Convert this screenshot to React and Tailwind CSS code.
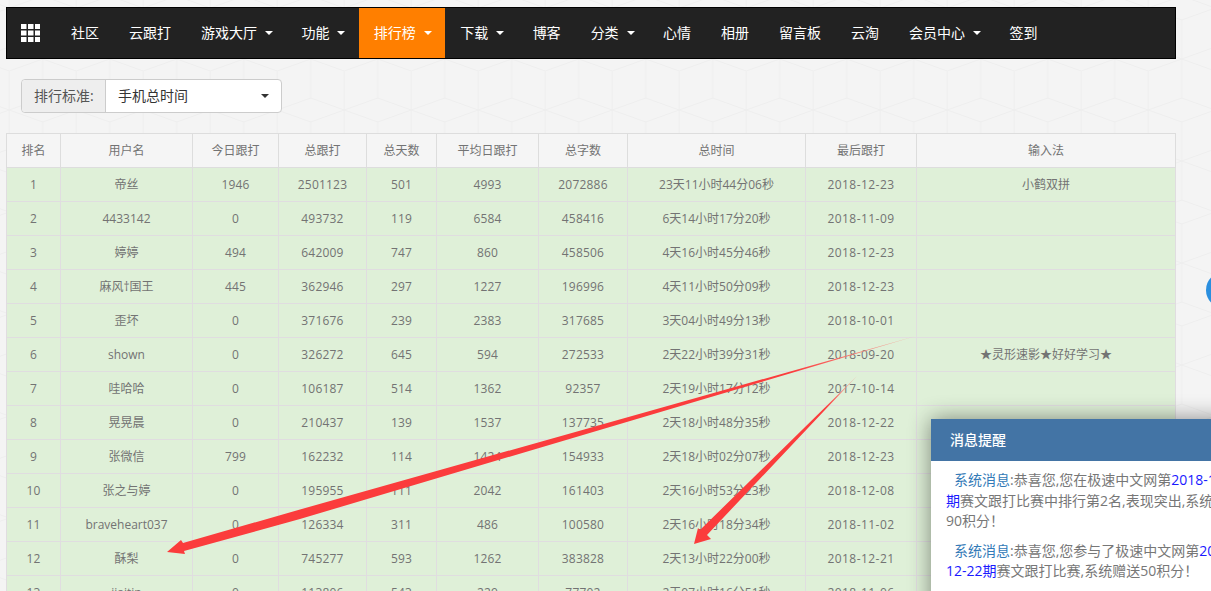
const navItems = [
  { label: "社区" },
  { label: "云跟打" },
  { label: "游戏大厅", caret: true },
  { label: "功能", caret: true },
  { label: "排行榜", caret: true, active: true },
  { label: "下载", caret: true },
  { label: "博客" },
  { label: "分类", caret: true },
  { label: "心情" },
  { label: "相册" },
  { label: "留言板" },
  { label: "云淘" },
  { label: "会员中心", caret: true },
  { label: "签到" },
];

const columns = [
  ["排名", "w-[54px]"],
  ["用户名", "w-[132px]"],
  ["今日跟打", "w-[86px]"],
  ["总跟打", "w-[88px]"],
  ["总天数", "w-[70px]"],
  ["平均日跟打", "w-[102px]"],
  ["总字数", "w-[89px]"],
  ["总时间", "w-[178px]"],
  ["最后跟打", "w-[111px]"],
  ["输入法", "w-[259px]"],
];

const rows = [
  [1, "帝丝", 1946, 2501123, 501, 4993, 2072886, "23天11小时44分06秒", "2018-12-23", "小鹤双拼"],
  [2, "4433142", 0, 493732, 119, 6584, 458416, "6天14小时17分20秒", "2018-11-09", ""],
  [3, "婷婷", 494, 642009, 747, 860, 458506, "4天16小时45分46秒", "2018-12-23", ""],
  [4, "麻风†国王", 445, 362946, 297, 1227, 196996, "4天11小时50分09秒", "2018-12-23", ""],
  [5, "歪坏", 0, 371676, 239, 2383, 317685, "3天04小时49分13秒", "2018-10-01", ""],
  [6, "shown", 0, 326272, 645, 594, 272533, "2天22小时39分31秒", "2018-09-20", "★灵形速影★好好学习★"],
  [7, "哇哈哈", 0, 106187, 514, 1362, 92357, "2天19小时17分12秒", "2017-10-14", ""],
  [8, "晃晃晨", 0, 210437, 139, 1537, 137735, "2天18小时48分35秒", "2018-12-22", ""],
  [9, "张微信", 799, 162232, 114, 1424, 154933, "2天18小时02分07秒", "2018-12-23", ""],
  [10, "张之与婷", 0, 195955, 111, 2042, 161403, "2天16小时53分23秒", "2018-12-08", ""],
  [11, "braveheart037", 0, 126334, 311, 486, 100580, "2天16小时18分34秒", "2018-11-02", ""],
  [12, "酥梨", 0, 745277, 593, 1262, 383828, "2天13小时22分00秒", "2018-12-21", ""],
  [13, "jiajtin", 0, 113806, 543, 229, 77702, "2天07小时16分51秒", "2018-11-06", ""],
];

function HexBackground() {
  return (
    <svg className="absolute inset-0 w-full h-full" aria-hidden="true">
      <defs>
        <pattern id="hex" width="67" height="102" patternUnits="userSpaceOnUse" patternTransform="translate(42.7 59)">
          <path
            d="M0 0V39L33.5 51L67 39V0M0 63V102M67 63V102M0 63L33.5 51L67 63M0 0L33.5 12L67 0M0 102L33.5 90L67 102M33.5 12V90"
            fill="none"
            stroke="#eeeeee"
            strokeWidth="1"
          />
        </pattern>
      </defs>
      <rect width="100%" height="100%" fill="url(#hex)" />
    </svg>
  );
}

function GridIcon() {
  return (
    <svg width="19" height="18" viewBox="0 0 19 18" fill="#fff" className="shrink-0">
      {[0, 7, 14].map((x) =>
        [0, 6.5, 13].map((y) => <rect key={x + "-" + y} x={x} y={y} width="5.5" height="5" />)
      )}
    </svg>
  );
}

function Caret({ className }) {
  return <span className={"inline-block w-0 h-0 border-x-4 border-x-transparent border-t-4 " + className} />;
}

function Arrows() {
  return (
    <svg className="absolute inset-0 w-full h-full pointer-events-none" aria-hidden="true">
      <defs>
        <linearGradient id="tail1" gradientUnits="userSpaceOnUse" x1="916" y1="336" x2="790" y2="372">
          <stop offset="0" stopColor="#f3b5a8" />
          <stop offset="1" stopColor="#fb3c3c" />
        </linearGradient>
        <linearGradient id="tail2" gradientUnits="userSpaceOnUse" x1="857" y1="376" x2="825" y2="410">
          <stop offset="0" stopColor="#f3b5a8" />
          <stop offset="1" stopColor="#fb3c3c" />
        </linearGradient>
      </defs>
      <polygon points="916,336 300,509.5 183,543 181,540 167,552 185,554 184,551 300,519" fill="url(#tail1)" />
      <polygon points="857,376 700,530 698,528 694,544 711,539 707,535" fill="url(#tail2)" />
    </svg>
  );
}

// digits in the reference run slightly wider than Open Sans
function cellTracking(i) {
  if (i === 8) return "tracking-[0.45px]";
  if ([0, 2, 3, 4, 5, 6].includes(i)) return "tracking-[0.2px]";
  return "";
}

export default function App() {
  return (
    <div
      className="relative h-screen overflow-hidden bg-[#f4f4f4] text-[#737373]"
      style={{ fontFamily: '"Open Sans", "Noto Sans CJK SC", sans-serif' }}
    >
      <HexBackground />

      <div className="relative pl-[6px] pt-[7px] w-[1176px]">
        <nav className="flex items-stretch h-[52px] bg-[#222] border border-black text-[14px] text-white">
          <div className="flex items-center pl-[14px] pr-[16px]">
            <GridIcon />
          </div>
          {navItems.map((item) => (
            <a
              key={item.label}
              className={
                "flex items-center gap-2 px-[15px] pb-[2px] " + (item.active ? "bg-[#ff7f00]" : "")
              }
            >
              {item.label}
              {item.caret && <Caret className="border-t-white -mr-[1.6px] mt-[2px]" />}
            </a>
          ))}
        </nav>

        <div className="flex w-[261px] h-[34px] mt-[20px] ml-[15px] text-[14px] border border-[#ccc] rounded bg-white">
          <div className="flex items-center w-[84px] pl-3 pb-[2px] bg-[#eee] text-[#555] border-r border-[#ccc] rounded-l">
            排行标准:
          </div>
          <div className="flex flex-1 items-center justify-between pl-3 pr-[12px] pb-[2px] text-[#333]">
            手机总时间
            <Caret className="border-t-[#333] mt-[2px]" />
          </div>
        </div>

        <table className="table-fixed border-collapse w-[1169px] mt-[20px] text-[12px] text-center">
          <colgroup>
            {columns.map(([name, width]) => (
              <col key={name} className={width} />
            ))}
          </colgroup>
          <thead>
            <tr className="bg-[#f5f5f5]">
              {columns.map(([name]) => (
                <th key={name} className="h-[34px] p-0 font-normal border border-[#ddd]">
                  {name}
                </th>
              ))}
            </tr>
          </thead>
          <tbody>
            {rows.map((row) => (
              <tr key={row[0]} className="bg-[#dff0d8]">
                {row.map((cell, i) => (
                  <td key={i} className={"h-[34px] p-0 border border-[#e0dde0] " + cellTracking(i)}>
                    {cell}
                  </td>
                ))}
              </tr>
            ))}
          </tbody>
        </table>
      </div>

      <Arrows />

      <div className="absolute left-[1206px] top-[272px] w-9 h-9 rounded-full bg-[#2a8fdf]" />

      <div className="absolute left-[931px] top-[419px] w-[440px] h-[300px] bg-white rounded-t-sm shadow-[0_0_22px_rgba(0,0,0,0.45)]">
        <div className="flex items-center h-[42px] pl-[19px] pb-[2px] bg-[#4374a5] text-[14px] text-white font-medium">
          消息提醒
        </div>
        <div className="pt-[9px] pl-[15px] text-[14px] leading-[20.5px] text-[#777] whitespace-nowrap">
          <p className="indent-2">
            <span className="text-[#337ab7]">系统消息</span>:恭喜您,您在极速中文网第
            <span className="text-[#1a1aff]">2018-12-22</span>
          </p>
          <p>
            <span className="text-[#1a1aff]">期</span>赛文跟打比赛中排行第2名,表现突出,系统赠送
          </p>
          <p>90积分！</p>
          <p className="indent-2 mt-[9px]">
            <span className="text-[#337ab7]">系统消息</span>:恭喜您,您参与了极速中文网第
            <span className="text-[#1a1aff]">2018-</span>
          </p>
          <p>
            <span className="text-[#1a1aff]">12-22期</span>赛文跟打比赛,系统赠送50积分！
          </p>
        </div>
      </div>
    </div>
  );
}
